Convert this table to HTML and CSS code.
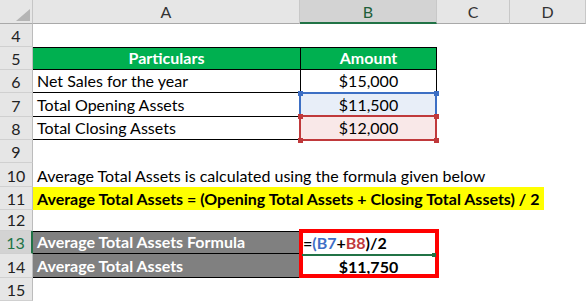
FILE: index.html
```html
<!DOCTYPE html>
<html>
<head>
<meta charset="utf-8">
<link rel="stylesheet" href="styles.css">
</head>
<body>
<div class="sheet">
  <div class="corner"><svg width="33" height="24" viewBox="0 0 33 24"><polygon points="30,9 30,21 16,21" fill="#b5b5b5"/></svg></div>
  <div class="ch">A</div>
  <div class="ch sel">B</div>
  <div class="ch">C</div>
  <div class="ch">D</div>

  <div class="rh">4</div><div class="c"></div><div class="c"></div><div class="c"></div><div class="c"></div>

  <div class="rh">5</div>
  <div class="c head center">Particulars</div>
  <div class="c head center colb">Amount</div>
  <div class="c"></div><div class="c"></div>

  <div class="rh">6</div>
  <div class="c line">Net Sales for the year</div>
  <div class="c line center colb">$15,000</div>
  <div class="c"></div><div class="c"></div>

  <div class="rh">7</div>
  <div class="c line">Total Opening Assets</div>
  <div class="c line center colb fill-blue">$11,500
    <div class="ref ref-blue"><i class="sq tl"></i><i class="sq tr"></i><i class="sq bl"></i><i class="sq br"></i></div>
  </div>
  <div class="c"></div><div class="c"></div>

  <div class="rh">8</div>
  <div class="c line">Total Closing Assets</div>
  <div class="c line center colb fill-red">$12,000
    <div class="ref ref-red"><i class="sq tl"></i><i class="sq tr"></i><i class="sq bl"></i><i class="sq br"></i></div>
  </div>
  <div class="c"></div><div class="c"></div>

  <div class="rh">9</div><div class="c"></div><div class="c"></div><div class="c"></div><div class="c"></div>

  <div class="rh">10</div>
  <div class="c span">Average Total Assets is calculated using the formula given below</div>

  <div class="rh">11</div>
  <div class="c span nopad"><span class="yellow">Average Total Assets = (Opening Total Assets + Closing Total Assets) / 2</span></div>

  <div class="rh">12</div><div class="c"></div><div class="c"></div><div class="c"></div><div class="c"></div>

  <div class="rh rsel">13</div>
  <div class="c gray top">Average Total Assets Formula</div>
  <div class="c bold formula"><span class="ftext">=<span class="blue">(B7</span>+<span class="red">B8</span>)/2</span>
    <div class="result-box"></div>
    <div class="edit-line"><i class="edit-sq"></i></div>
  </div>
  <div class="c"></div><div class="c"></div>

  <div class="rh">14</div>
  <div class="c gray">Average Total Assets</div>
  <div class="c bold center">$11,750</div>
  <div class="c"></div><div class="c"></div>

  <div class="rh">15</div><div class="c"></div><div class="c"></div><div class="c"></div><div class="c"></div>
</div>
</body>
</html>
```

FILE: styles.css
```css
html, body {
  margin: 0;
  padding: 0;
  background: #ffffff;
}

.sheet {
  display: grid;
  grid-template-columns: 33px 267px 137px 73px 76px;
  grid-template-rows: 24px 23px 23px 23px 24px 23px 23px 24px 23px 21px 23px 24px 23px;
  width: 586px;
  height: 301px;
  overflow: hidden;
  font-family: "Lato", "Liberation Sans", sans-serif;
  font-size: 16px;
  color: #000;
}

.corner {
  background: #e6e6e6;
  border-right: 1px solid #c6c6c6;
  border-bottom: 1px solid #a9a9a9;
  box-sizing: border-box;
}
.corner svg { display: block; }

.ch {
  background: #e6e6e6;
  border-right: 1px solid #c8c8c8;
  border-bottom: 1px solid #a9a9a9;
  box-sizing: border-box;
  display: flex;
  align-items: flex-end;
  justify-content: center;
  line-height: 19px;
  padding-bottom: 2px;
  color: #333;
}
.ch.sel {
  background: #d3d3d3;
  border-bottom: 2px solid #217346;
  padding-bottom: 1px;
  color: #1f5f3a;
}

.rh {
  background: #e6e6e6;
  border-right: 1px solid #bcbcbc;
  border-bottom: 1px solid #d0d0d0;
  box-sizing: border-box;
  display: flex;
  align-items: flex-end;
  justify-content: center;
  line-height: 19px;
  padding-bottom: 1px;
  color: #222;
}
.rh.rsel {
  background: #d3d3d3;
  color: #217346;
  border-right: 2px solid #217346;
}

.c {
  position: relative;
  box-sizing: border-box;
  display: flex;
  align-items: flex-end;
  padding: 0 4px 2px 4px;
  line-height: 19px;
  white-space: nowrap;
  overflow: visible;
}
.center { justify-content: center; }
.bold { font-weight: 700; }
.span { grid-column: 2 / 6; }
.nopad { padding: 0; align-items: stretch; }

.head {
  background: #00b050;
  color: #ffffff;
  font-weight: 700;
  border-top: 1px solid #000;
  border-bottom: 1px solid #000;
}
.line { border-bottom: 1px solid #000; }
.colb {
  border-left: 1px solid #000;
  border-right: 1px solid #000;
}
.fill-blue { background: #e8eef8; }
.fill-red { background: #f9e8e8; }

.ref {
  position: absolute;
  box-sizing: border-box;
  left: -2px;
  width: 138px;
  border: 2px solid;
}
.ref-blue {
  top: -1px;
  height: 25px;
  border-color: #3d6fc4;
  color: #3d6fc4;
}
.ref-red {
  top: -2px;
  height: 26px;
  border-color: #c0393b;
  color: #c0393b;
  z-index: 2;
}
.sq {
  position: absolute;
  width: 5px;
  height: 5px;
  background: currentColor;
}
.sq.tl { left: -3px; top: -3px; }
.sq.tr { left: 133px; top: -3px; }
.ref-blue .sq.bl { left: -3px; top: 20px; }
.ref-blue .sq.br { left: 133px; top: 20px; }
.ref-red .sq.bl { left: -3px; top: 21px; }
.ref-red .sq.br { left: 133px; top: 21px; }

.yellow {
  display: flex;
  align-items: flex-end;
  width: 511px;
  box-sizing: border-box;
  padding: 0 4px 2px 4px;
  background: #ffff00;
  font-weight: 700;
}

.gray {
  background: #808080;
  color: #ffffff;
  font-weight: 700;
  border-bottom: 1px solid #000;
}
.gray.top { border-top: 1px solid #000; }

.formula { padding-left: 3px; }
.ftext { position: relative; z-index: 5; }
.formula .blue { color: #3f6fc6; }
.formula .red { color: #c0393b; }

.result-box {
  position: absolute;
  left: -1px;
  top: -2px;
  width: 140px;
  height: 49px;
  box-sizing: border-box;
  border: 4px solid #ff0000;
  z-index: 3;
}
.edit-line {
  position: absolute;
  left: 2px;
  top: 23px;
  width: 132px;
  height: 2px;
  background: #217346;
  z-index: 4;
}
.edit-sq {
  position: absolute;
  right: -2px;
  top: -1px;
  width: 4px;
  height: 4px;
  background: #217346;
}
```
